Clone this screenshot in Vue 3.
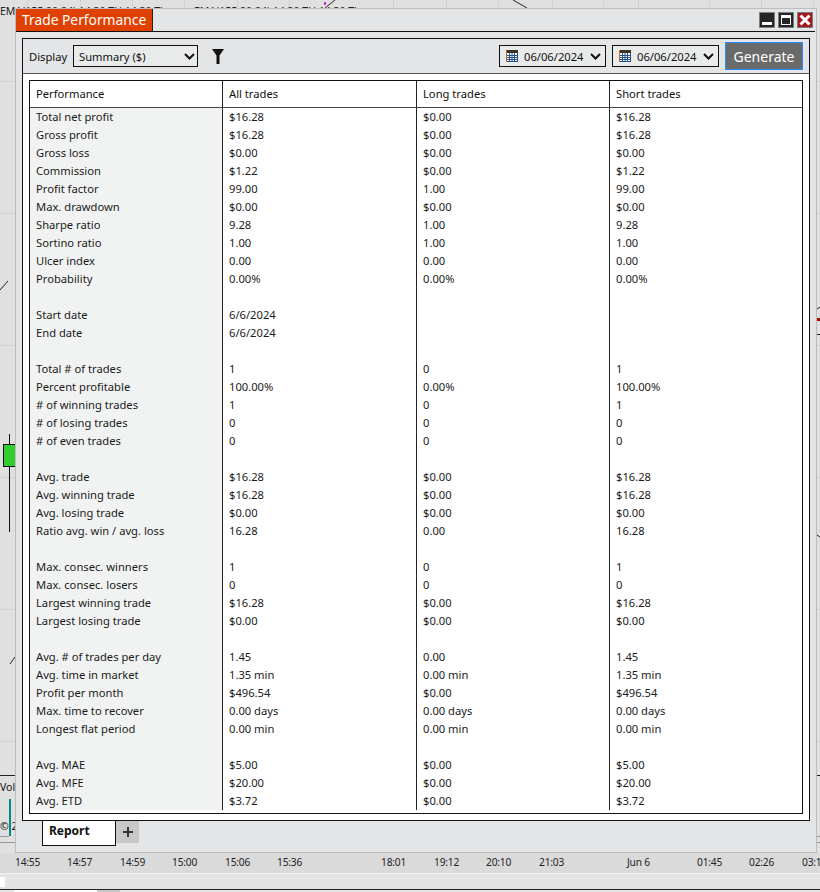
<template>
  <div class="desktop">
    <div class="chart">
      <div class="chart-area">
        <span v-for="y in gridY" :key="'h' + y" class="grid-h" :style="{ top: y + 'px' }"></span>
        <span v-for="x in gridX" :key="'v' + x" class="grid-v" :style="{ left: x + 'px' }"></span>
        <span class="chart-label">EMA(155,20,24) 14:30 TH 14:30 Th</span>
        <span class="chart-label second">EMA(155,20,24) 14:30 TH 14:30 Th</span>
        <svg class="chart-lines" width="820" height="853" viewBox="0 0 820 853">
          <g stroke="#222" fill="none">
            <path d="M325 8 335 0M513 0 527 8M0 290 8 281M10 664 15 657M817 309 820 307M817 535 820 537" />
            <path d="M817 334.5H820M0 775.5H15M817 775.5H820" />
            <path d="M0 842.5H15M817 842.5H820M0 836.5H9M817 836.5H820" stroke="#999" />
          </g>
          <rect x="817" y="318" width="3" height="3" fill="#9c0a0a" />
          <rect x="324" y="2" width="2" height="3" fill="#e020e0" />
        </svg>
        <span class="wick"></span>
        <span class="candle"></span>
        <span class="vol-label">Vol</span>
        <span class="vol-bar"></span>
        <span class="copy-label">© 2</span>
      </div>
      <div class="time-axis">
        <span v-for="t in times" :key="t.label" class="tick" :style="{ left: t.x + 'px' }">{{ t.label }}</span>
      </div>
      <div class="status-strip"><span class="status-chip"></span></div>
      <div class="bottom-tabs">
        <span class="bottom-tab"></span>
        <span class="bottom-tab grey"></span>
      </div>
    </div>

    <section class="window">
      <header class="title-row">
        <h1 class="title-tab">Trade Performance</h1>
        <div class="win-buttons">
          <button class="win-btn"><span class="min-mark"></span></button>
          <button class="win-btn"><span class="max-mark"></span></button>
          <button class="win-btn close">
            <svg width="12" height="12" viewBox="0 0 12 12">
              <path d="M1.5 1.5 10.5 10.5M10.5 1.5 1.5 10.5" stroke="#fff" stroke-width="3" fill="none" />
            </svg>
          </button>
        </div>
      </header>

      <div class="panel">
        <div class="toolbar">
          <label class="display-label">Display</label>
          <div class="select display-select">
            <span>Summary ($)</span>
            <svg class="chev" width="11" height="7" viewBox="0 0 11 7">
              <path d="M1 1 5.5 5.5 10 1" stroke="#111" stroke-width="2" fill="none" />
            </svg>
          </div>
          <svg class="funnel" width="12" height="15" viewBox="0 0 12 15">
            <path d="M0 0H12L7.5 6.5V15H4.5V6.5Z" fill="#111" />
          </svg>
          <div class="spacer"></div>
          <div v-for="n in 2" :key="n" class="select date-select">
            <svg width="12" height="12" viewBox="0 0 12 12">
              <rect width="12" height="12" fill="#fff" />
              <rect width="12" height="3" fill="#3a3226" />
              <path d="M.5 0V12" stroke="#c2681e" />
              <path d="M1 5.5H12M1 7.5H12M1 9.5H12M1 11.5H12M3.5 3V12M6 3V12M8.5 3V12M11.5 3V12" stroke="#24508f" />
            </svg>
            <span class="date-text">06/06/2024</span>
            <svg class="chev" width="11" height="7" viewBox="0 0 11 7">
              <path d="M1 1 5.5 5.5 10 1" stroke="#111" stroke-width="2" fill="none" />
            </svg>
          </div>
          <button class="generate">Generate</button>
        </div>

        <div class="report">
          <div class="table">
            <div class="head-row">
              <div class="cell head first">Performance</div>
              <div class="cell head">All trades</div>
              <div class="cell head">Long trades</div>
              <div class="cell head">Short trades</div>
            </div>
            <div v-for="(row, i) in rows" :key="i" class="row">
              <div class="cell first">{{ row[0] }}</div>
              <div class="cell">{{ row[1] }}</div>
              <div class="cell">{{ row[2] }}</div>
              <div class="cell">{{ row[3] }}</div>
            </div>
          </div>
        </div>
      </div>

      <div class="tabs">
        <div class="tab">Report</div>
        <div class="tab-add">
          <svg width="10" height="10" viewBox="0 0 10 10">
            <path d="M5 0V10M0 5H10" stroke="#333" stroke-width="2" />
          </svg>
        </div>
      </div>
    </section>
  </div>
</template>

<script setup>
const gridY = [81, 213, 345, 477, 609, 741]
const gridX = [27, 80, 132, 184, 237, 289, 393, 446, 498, 552, 603, 638, 709, 761, 813]

const times = [
  { label: '14:55', x: 15 }, { label: '14:57', x: 67 }, { label: '14:59', x: 120 },
  { label: '15:00', x: 172 }, { label: '15:06', x: 225 }, { label: '15:36', x: 277 },
  { label: '18:01', x: 381 }, { label: '19:12', x: 434 }, { label: '20:10', x: 486 },
  { label: '21:03', x: 539 }, { label: 'Jun 6', x: 627 }, { label: '01:45', x: 697 },
  { label: '02:26', x: 749 }, { label: '03:1', x: 802 },
]

const rows = [
  ['Total net profit', '$16.28', '$0.00', '$16.28'],
  ['Gross profit', '$16.28', '$0.00', '$16.28'],
  ['Gross loss', '$0.00', '$0.00', '$0.00'],
  ['Commission', '$1.22', '$0.00', '$1.22'],
  ['Profit factor', '99.00', '1.00', '99.00'],
  ['Max. drawdown', '$0.00', '$0.00', '$0.00'],
  ['Sharpe ratio', '9.28', '1.00', '9.28'],
  ['Sortino ratio', '1.00', '1.00', '1.00'],
  ['Ulcer index', '0.00', '0.00', '0.00'],
  ['Probability', '0.00%', '0.00%', '0.00%'],
  ['', '', '', ''],
  ['Start date', '6/6/2024', '', ''],
  ['End date', '6/6/2024', '', ''],
  ['', '', '', ''],
  ['Total # of trades', '1', '0', '1'],
  ['Percent profitable', '100.00%', '0.00%', '100.00%'],
  ['# of winning trades', '1', '0', '1'],
  ['# of losing trades', '0', '0', '0'],
  ['# of even trades', '0', '0', '0'],
  ['', '', '', ''],
  ['Avg. trade', '$16.28', '$0.00', '$16.28'],
  ['Avg. winning trade', '$16.28', '$0.00', '$16.28'],
  ['Avg. losing trade', '$0.00', '$0.00', '$0.00'],
  ['Ratio avg. win / avg. loss', '16.28', '0.00', '16.28'],
  ['', '', '', ''],
  ['Max. consec. winners', '1', '0', '1'],
  ['Max. consec. losers', '0', '0', '0'],
  ['Largest winning trade', '$16.28', '$0.00', '$16.28'],
  ['Largest losing trade', '$0.00', '$0.00', '$0.00'],
  ['', '', '', ''],
  ['Avg. # of trades per day', '1.45', '0.00', '1.45'],
  ['Avg. time in market', '1.35 min', '0.00 min', '1.35 min'],
  ['Profit per month', '$496.54', '$0.00', '$496.54'],
  ['Max. time to recover', '0.00 days', '0.00 days', '0.00 days'],
  ['Longest flat period', '0.00 min', '0.00 min', '0.00 min'],
  ['', '', '', ''],
  ['Avg. MAE', '$5.00', '$0.00', '$5.00'],
  ['Avg. MFE', '$20.00', '$0.00', '$20.00'],
  ['Avg. ETD', '$3.72', '$0.00', '$3.72'],
]
</script>

<style>
html, body { margin: 0; background: #dedede; overflow: hidden; }
</style>

<style scoped>
.desktop {
  position: relative;
  width: 820px;
  height: 892px;
  overflow: hidden;
  font-family: "Noto Sans", "Open Sans", sans-serif;
  font-size: 11.2px;
  color: #111;
}
.chart { display: flex; flex-direction: column; height: 892px; }
.chart-area { position: relative; height: 853px; background: #e0e0e0; overflow: hidden; flex-shrink: 0; }
.chart-label { position: absolute; left: 0; top: 4px; font-size: 10.5px; white-space: nowrap; color: #222; }
.chart-label.second { left: 194px; }
.chart-lines { position: absolute; left: 0; top: 0; }
.grid-h { position: absolute; left: 0; right: 0; height: 1px; background: #d2d2d2; }
.grid-v { position: absolute; top: 0; bottom: 0; width: 1px; background: #d2d2d2; }
.wick { position: absolute; left: 9px; top: 434px; width: 1px; height: 98px; background: #111; }
.candle { position: absolute; left: 3px; top: 444px; width: 13px; height: 23px; background: #32cd32; border: 1px solid #111; box-sizing: border-box; }
.vol-label { position: absolute; left: 0; top: 780px; font-size: 10.5px; }
.vol-bar { position: absolute; left: 9px; top: 799px; width: 2px; height: 37px; background: #008b8b; }
.copy-label { position: absolute; left: 0; top: 819px; font-size: 10.5px; }
.time-axis { position: relative; height: 20px; background: #dadada; flex-shrink: 0; }
.tick { position: absolute; top: 1px; font-size: 10.2px; letter-spacing: -0.2px; line-height: 17px; color: #222; }
.status-strip { height: 15px; background: #e4e4e4; border-top: 1px solid #f4f4f4; position: relative; flex-shrink: 0; }
.status-chip { position: absolute; left: 0; top: 3px; width: 5px; height: 10px; background: #fff; }
.bottom-tabs { flex: 1; background: #e4e4e4; border-top: 1px solid #222; display: flex; padding-left: 14px; }
.bottom-tab { width: 83px; background: #fff; }
.bottom-tab.grey { width: 23px; background: #c8c8c8; }

.window {
  position: absolute;
  left: 15px;
  top: 8px;
  width: 802px;
  height: 845px;
  box-sizing: border-box;
  background: #e4e5e7;
  border: 1px solid #bdbdbd;
  display: flex;
  flex-direction: column;
}
.title-row {
  display: flex;
  justify-content: space-between;
  height: 23px;
  margin-right: 1px;
  border-bottom: 1px solid #111;
  box-sizing: border-box;
  flex-shrink: 0;
}
.title-tab {
  margin: 0;
  width: 136px;
  height: 22px;
  box-sizing: border-box;
  padding-left: 6px;
  background: #e04000;
  color: #fff;
  font-size: 13.8px;
  font-weight: 400;
  line-height: 21px;
  white-space: nowrap;
  box-shadow: 1px 0 0 #222;
}
.win-buttons { display: flex; gap: 3px; padding-top: 3px; margin-right: 2px; }
.win-btn {
  width: 16px;
  height: 16px;
  padding: 0;
  border: 1px solid #7d7d7d;
  box-sizing: border-box;
  background: #262424;
  display: flex;
  align-items: center;
  justify-content: center;
}
.win-btn.close { background: #a5161f; }
.min-mark { width: 10px; height: 3px; background: #fff; margin-top: 7px; }
.max-mark { width: 10px; height: 10px; border: 1px solid #fff; border-top-width: 3px; box-sizing: border-box; }

.panel {
  margin: 6px 6px 0;
  width: 788px;
  box-sizing: border-box;
  border: 1px solid #111;
  height: 783px;
  display: flex;
  flex-direction: column;
  flex-shrink: 0;
}
.toolbar {
  display: flex;
  align-items: center;
  height: 34px;
  padding: 0 6px;
  border-bottom: 1px solid #555;
  flex-shrink: 0;
}
.display-label { width: 44px; }
.select {
  display: flex;
  align-items: center;
  box-sizing: border-box;
  height: 22px;
  border: 1px solid #111;
  background: #e9ebeb;
}
.display-select { width: 125px; padding: 0 2px 0 5px; justify-content: space-between; }
.funnel { margin-left: 14px; }
.spacer { flex: 1; }
.date-select { width: 107px; padding: 0 4px 0 6px; margin-right: 6px; }
.date-text { margin-left: 6px; flex: 1; }
.generate {
  width: 78px;
  height: 28px;
  padding: 0;
  border: 1px solid #1e90ff;
  background: #6a6a6a;
  color: #fff;
  font: inherit;
  font-size: 14px;
}

.report { background: #fff; padding: 6px 6px 0; flex: 1; }
.table { border: 1px solid #111; height: 734px; box-sizing: border-box; background: #fff; }
.head-row { display: grid; grid-template-columns: 192px 194px 193px 1fr; height: 27px; border-bottom: 1px solid #444; box-sizing: border-box; }
.row { display: grid; grid-template-columns: 192px 194px 193px 1fr; height: 18px; }
.cell { padding-left: 6px; line-height: 18px; border-left: 1px solid #222; white-space: nowrap; color: #1a1a1a; }
.cell.first { border-left: 0; background: #f1f3f2; }
.cell.head { line-height: 26px; color: #111; }
.cell.head.first { background: #fff; }

.tabs { display: flex; align-items: flex-start; padding-left: 26px; }
.tab {
  width: 74px;
  height: 25px;
  box-sizing: border-box;
  background: #fff;
  border: 1px solid #111;
  border-top: 0;
  padding-left: 6px;
  font-weight: 700;
  font-size: 12px;
  line-height: 19px;
}
.tab-add {
  width: 23px;
  height: 22px;
  background: #c8c8c8;
  display: flex;
  align-items: center;
  justify-content: center;
}
</style>
